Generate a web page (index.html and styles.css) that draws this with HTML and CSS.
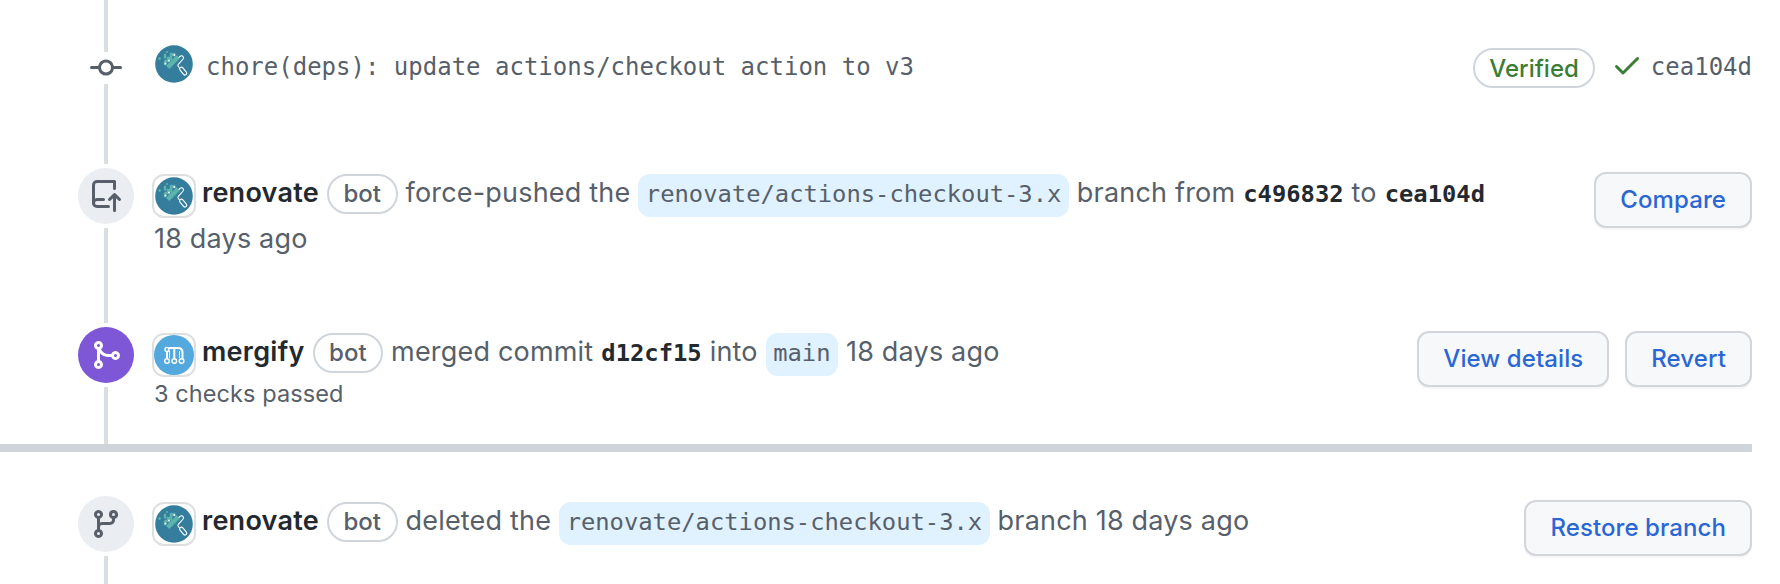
FILE: index.html
```html
<!DOCTYPE html>
<html lang="en">
<head>
<meta charset="utf-8">
<title>Pull request timeline</title>
<link rel="stylesheet" href="styles.css">
</head>
<body>
<svg class="defs" width="0" height="0" aria-hidden="true">
  <symbol id="renovate" viewBox="0 0 38 38">
    <circle cx="19" cy="19" r="18.8" fill="#347d9c"/>
    <path d="M11 20.800 21.500 10.300l3.300 3.300L14.300 24.100z" fill="#5bb5ac"/>
    <path d="M10 19v-3h3v-3h3v-3h3V7M16 14v-5M6 12h0M10 10v3" fill="none" stroke="#5bb5ac" stroke-width="2.400" stroke-linecap="square" stroke-dasharray="2.200 2"/>
    <circle cx="4.600" cy="13.600" r="1.300" fill="#5bb5ac"/><circle cx="12" cy="7" r="1" fill="#5bb5ac"/>
    <g fill="#fff"><circle cx="10.500" cy="18.600" r="1"/><circle cx="14" cy="15.400" r="1"/><circle cx="19.400" cy="10" r="1"/></g>
    <path d="M23.600 12.600l2-1.600q1.500-.8 2.500.5.800 1.300 0 2.500L23.300 19.300q-1 1.400.2 2.400l1 1.200" fill="none" stroke="#fff" stroke-width="1.100"/>
    <rect x="23.900" y="22.500" width="3.600" height="9" rx="1.700" transform="rotate(-39 25.700 23)" fill="none" stroke="#fff" stroke-width="1.100"/>
  </symbol>
  <symbol id="mergify" viewBox="0 0 40 40">
    <circle cx="20" cy="20" r="20" fill="#53a8dd"/>
    <g fill="none" stroke="#fff" stroke-width="1.400">
      <circle cx="13" cy="14.500" r="2"/><circle cx="13" cy="26" r="2.300"/><circle cx="20.300" cy="26" r="2.300"/><circle cx="27.600" cy="26" r="2.300"/>
      <path d="M15 13h9q4.500 0 4.500 4.500v6M13 16.500v7M20.300 14v9.500" stroke-width="2"/>
      <path d="M15.500 23v-7M25.500 23v-7" stroke-width="1"/>
    </g>
  </symbol>
</svg>
<main class="timeline">
  <section class="item item-commit">
    <div class="rail">
      <i class="line line-top"></i>
      <svg class="icon" viewBox="0 0 16 16"><path d="M10.500 7.750a2.500 2.500 0 11-5 0 2.500 2.500 0 015 0zm1.430.750a4.002 4.002 0 01-7.860 0H.750a.750.750 0 110-1.500h3.320a4.001 4.001 0 017.860 0h3.320a.750.750 0 110 1.500h-3.320z"/></svg>
      <i class="line"></i>
    </div>
    <div class="body commit-body">
      <svg class="avatar-plain"><use href="#renovate"/></svg>
      <code class="commit-title">chore(deps): update actions/checkout action to v3</code>
    </div>
    <div class="commit-meta">
      <span class="pill verified">Verified</span>
      <svg class="icon check" viewBox="0 0 16 16"><path d="M13.780 4.220a.750.750 0 010 1.060l-7.250 7.250a.750.750 0 01-1.060 0L2.220 9.280a.750.750 0 011.060-1.060L6 10.940l6.720-6.720a.750.750 0 011.060 0z"/></svg>
      <code class="sha">cea104d</code>
    </div>
  </section>

  <section class="item item-push">
    <div class="rail">
      <i class="line line-top"></i>
      <span class="badge"><svg class="icon" viewBox="0 0 16 16"><path d="M1 2.500A2.500 2.500 0 013.500 0h8.750a.750.750 0 01.750.750v3.500a.750.750 0 01-1.500 0V1.500h-8a1 1 0 00-1 1v6.708A2.492 2.492 0 013.500 9h3.250a.750.750 0 010 1.500H3.500a1 1 0 100 2h5.750a.750.750 0 010 1.500H3.500A2.500 2.500 0 011 11.500v-9zm13.230 7.790a.750.750 0 001.060-1.060l-2.505-2.505a.750.750 0 00-1.060 0L9.220 9.229a.750.750 0 001.060 1.061l1.225-1.224v6.184a.750.750 0 001.500 0V9.066l1.224 1.224z"/></svg></span>
      <i class="line"></i>
    </div>
    <div class="body">
      <div class="sentence">
        <span class="avatar"><svg class="small"><use href="#renovate"/></svg></span>
        <b class="author">renovate</b><span class="pill bot">bot</span>
        <span class="words">force-pushed the</span><code class="ref">renovate/actions-checkout-3.x</code>
        <span class="words">branch from</span><code class="hash">c496832</code><span class="words">to</span><code class="hash">cea104d</code>
      </div>
      <div class="when">18 days ago</div>
    </div>
    <div class="actions"><button class="btn">Compare</button></div>
  </section>

  <section class="item item-merge">
    <div class="rail">
      <i class="line line-top"></i>
      <span class="badge merged"><svg class="icon" viewBox="0 0 16 16"><path d="M5 3.254V3.250v.005a.750.750 0 110-.005v.004zm.450 1.900a2.250 2.250 0 10-1.950.218v5.256a2.250 2.250 0 101.500 0V7.123A5.735 5.735 0 009.250 9h1.378a2.250 2.250 0 100-1.500H9.250a4.250 4.250 0 01-3.800-2.346zM12.750 9a.750.750 0 100-1.500.750.750 0 000 1.500zm-8.500 4.500a.750.750 0 100-1.500.750.750 0 000 1.500z"/></svg></span>
      <i class="line"></i>
    </div>
    <div class="body">
      <div class="sentence">
        <span class="avatar"><svg><use href="#mergify"/></svg></span>
        <b class="author">mergify</b><span class="pill bot">bot</span>
        <span class="words">merged commit</span><code class="hash">d12cf15</code><span class="words">into</span><code class="ref">main</code>
        <span class="words">18 days ago</span>
      </div>
      <div class="checks">3 checks passed</div>
    </div>
    <div class="actions"><button class="btn">View details</button><button class="btn">Revert</button></div>
  </section>

  <div class="break"></div>

  <section class="item item-deleted">
    <div class="rail">
      <span class="badge"><svg class="icon" viewBox="0 0 16 16"><path d="M11.750 2.500a.750.750 0 100 1.500.750.750 0 000-1.500zm-2.250.750a2.250 2.250 0 113 2.122V6A2.500 2.500 0 0110 8.500H6a1 1 0 00-1 1v1.128a2.251 2.251 0 11-1.500 0V5.372a2.250 2.250 0 111.500 0v1.836A2.492 2.492 0 016 7h4a1 1 0 001-1v-.628A2.250 2.250 0 019.500 3.250zM4.250 12a.750.750 0 100 1.500.750.750 0 000-1.500zM3.500 3.250a.750.750 0 111.500 0 .750.750 0 01-1.500 0z"/></svg></span>
      <i class="line"></i>
    </div>
    <div class="body">
      <div class="sentence">
        <span class="avatar"><svg class="small"><use href="#renovate"/></svg></span>
        <b class="author">renovate</b><span class="pill bot">bot</span>
        <span class="words">deleted the</span><code class="ref">renovate/actions-checkout-3.x</code>
        <span class="words">branch 18 days ago</span>
      </div>
    </div>
    <div class="actions"><button class="btn">Restore branch</button></div>
  </section>
</main>
</body>
</html>
```
FILE: styles.css
```css
* { box-sizing: border-box; }
html { overflow: hidden; }
body {
  margin: 0;
  background: #fff;
  color: #57606a;
  font: 27px/38px Inter, "Liberation Sans", sans-serif;
  letter-spacing: .190px;
  white-space: nowrap;
}
.defs { position: absolute; }
code { font-family: "DejaVu Sans Mono", monospace; letter-spacing: 0; }
svg { display: block; flex: none; }
.timeline { width: 1752px; height: 584px; display: flex; flex-direction: column; }
.item { display: flex; align-items: flex-start; padding-left: 78px; flex: none; }
.item-commit { height: 132px; }
.item-push { height: 159px; }
.item-merge { height: 153px; }
.item-deleted { height: 132px; }
.break { height: 8px; flex: none; background: #d0d5dc; }

.rail { width: 56px; height: 100%; display: flex; flex-direction: column; align-items: center; }
.line { width: 4px; flex: 1; background: #d8dee3; }
.line-top { flex: none; height: 32px; }
.item-commit .line-top { height: 52px; }
.icon { width: 32px; height: 32px; fill: #57606a; fill-rule: evenodd; }
.badge {
  width: 56px; height: 56px; margin: 4px 0; flex: none;
  border-radius: 50%; background: #eaedf2;
  display: grid; place-items: center;
}
.merged { background: #7d57d6; }
.merged .icon { fill: #fff; }
.item-deleted .rail { padding-top: 40px; }

.body { flex: 1; padding: 42px 0 0 18px; }
.item-deleted .body { padding-top: 50px; }
.sentence { display: flex; align-items: flex-start; gap: 8px; height: 44px; }
.avatar {
  width: 44px; height: 44px; flex: none;
  border: 2px solid #dedfe0; border-radius: 12px;
  display: grid; place-items: center;
  margin-right: -2px;
}
.avatar svg { width: 40px; height: 40px; }
.avatar .small { width: 38px; height: 38px; }
.author { color: #24292f; font-weight: 600; letter-spacing: .260px; }
.pill {
  height: 40px; padding: 0 14.500px;
  border: 2px solid #d0d5dc; border-radius: 20px;
  font-size: 24px; font-weight: 500; line-height: 36px; letter-spacing: 0;
}
.ref {
  height: 43px; padding: 0 7.500px; border-radius: 12px;
  background: #e0f2ff;
  font-size: 23.800px; line-height: 41px;
}
.hash { color: #24292f; font-size: 23.800px; font-weight: 700; line-height: 41px; }
.when { padding-left: 2px; line-height: 41px; }
.checks { padding-left: 2px; font-size: 23.500px; line-height: 34px; letter-spacing: .080px; }

.commit-body { display: flex; align-items: flex-start; gap: 13px; padding: 45px 0 0 21px; }
.avatar-plain { width: 38px; height: 38px; }
.commit-title { font-size: 24px; line-height: 44px; }
.commit-meta { display: flex; align-items: flex-start; padding-top: 48px; }
.verified { color: #3a7d34; padding: 0 14px; line-height: 37px; }
.check { fill: #3a7d34; margin: 1px 8px 0 16px; }
.sha { font-size: 24px; line-height: 39px; }

.actions { display: flex; gap: 16px; padding-top: 40px; }
.item-deleted .actions { padding-top: 48px; }
.btn {
  height: 56px; padding: 0 24px 1px;
  border: 2px solid #d2d5d9; border-radius: 12px;
  background: #f6f8fa; color: #2a67d4;
  font: 500 24px/50px Inter, "Liberation Sans", sans-serif;
  letter-spacing: .090px;
  box-shadow: 0 2px 0 rgba(27, 31, 36, .04);
}
```
